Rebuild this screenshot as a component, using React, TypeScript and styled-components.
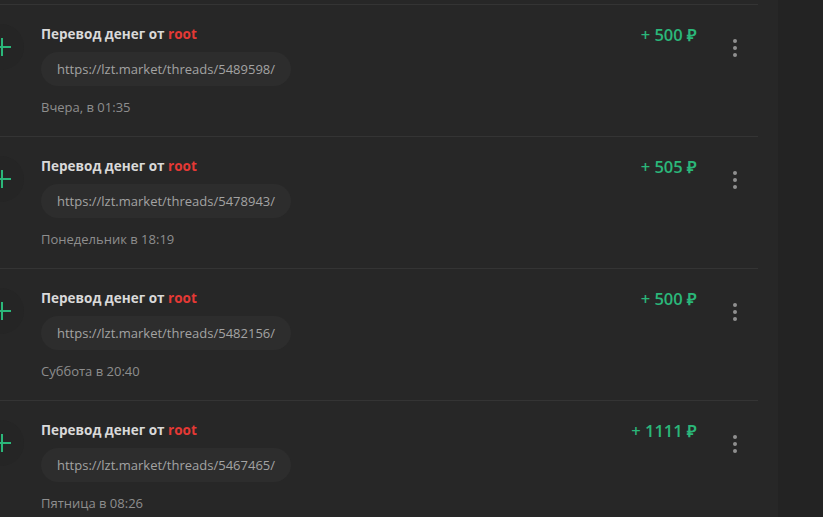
import styled, { createGlobalStyle } from "styled-components"

const GlobalStyle = createGlobalStyle`
  html, body {
    margin: 0;
    padding: 0;
    background: #232323;
    font-family: "Open Sans", "Liberation Sans", sans-serif;
    overflow: hidden;
  }
`

const Page = styled.div`
  display: flex;
  min-height: 100vh;
`

const Main = styled.div`
  width: 778px;
  background: #272727;
  padding-top: 4px;
  overflow: hidden;
`

const Sidebar = styled.div`
  flex: 1;
  background: #232323;
`

const List = styled.div`
  width: 758px;
`

const Item = styled.div`
  display: flex;
  align-items: flex-start;
  height: 132px;
  box-sizing: border-box;
  padding-top: 20px;
  border-top: 1px solid #343434;
`

const Icon = styled.div`
  flex: none;
  width: 46px;
  height: 46px;
  margin-top: -1px;
  margin-left: -22px;
  margin-right: 17px;
  border-radius: 50%;
  background: #252525;
  display: flex;
  align-items: center;
  justify-content: center;
`

const Content = styled.div`
  flex: 1;
  display: flex;
  flex-direction: column;
  align-items: flex-start;
`

const Title = styled.div`
  font-size: 13.5px;
  font-weight: 700;
  line-height: 18px;
  color: #d9d9d9;
`

const User = styled.span`
  color: #e53935;
`

const LinkPill = styled.div`
  margin-top: 9px;
  height: 34px;
  line-height: 34px;
  padding: 0 16px;
  border-radius: 17px;
  background: #2d2d2d;
  font-size: 13px;
  color: #a3a3a3;
`

const Date = styled.div`
  margin-top: 12px;
  font-size: 13px;
  line-height: 18px;
  color: #8e8e8e;
`

const Side = styled.div`
  display: flex;
  align-items: flex-start;
  padding-right: 11px;
`

const Amount = styled.div`
  margin-top: -1px;
  margin-right: 26px;
  font-size: 16.5px;
  font-weight: 600;
  line-height: 22px;
  color: #2bb77a;
`

const MenuButton = styled.div`
  width: 24px;
  height: 30px;
  margin-top: 8px;
  display: flex;
  flex-direction: column;
  align-items: center;
  justify-content: center;
  gap: 3px;
`

const Dot = styled.span`
  width: 4px;
  height: 4px;
  border-radius: 50%;
  background: #8f8f8f;
`

const PlusIcon = () => (
  <svg width="20" height="20" viewBox="0 0 20 20" style={{ marginLeft: 2 }}>
    <path d="M10 1v18M1 10h18" stroke="#2bb77a" strokeWidth="2" fill="none" />
  </svg>
)

const items = [
  { amount: "+ 500 ₽", link: "https://lzt.market/threads/5489598/", date: "Вчера, в 01:35" },
  { amount: "+ 505 ₽", link: "https://lzt.market/threads/5478943/", date: "Понедельник в 18:19" },
  { amount: "+ 500 ₽", link: "https://lzt.market/threads/5482156/", date: "Суббота в 20:40" },
  { amount: "+ 1111 ₽", link: "https://lzt.market/threads/5467465/", date: "Пятница в 08:26" },
]

const App = () => {
  return (
    <>
      <GlobalStyle />
      <Page>
        <Main>
          <List>
            {items.map((it, i) => (
              <Item key={i}>
                <Icon>
                  <PlusIcon />
                </Icon>
                <Content>
                  <Title>
                    Перевод денег от <User>root</User>
                  </Title>
                  <LinkPill>{it.link}</LinkPill>
                  <Date>{it.date}</Date>
                </Content>
                <Side>
                  <Amount>{it.amount}</Amount>
                  <MenuButton>
                    <Dot />
                    <Dot />
                    <Dot />
                  </MenuButton>
                </Side>
              </Item>
            ))}
          </List>
        </Main>
        <Sidebar />
      </Page>
    </>
  )
}

export default App
